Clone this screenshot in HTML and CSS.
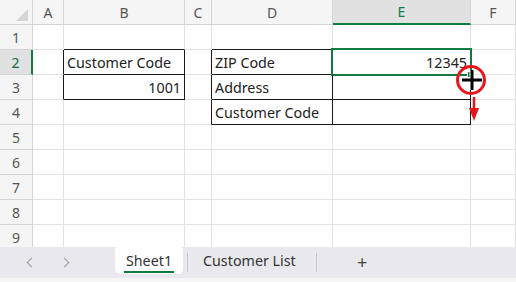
FILE: index.html
```html
<!DOCTYPE html>
<html>
<head>
<meta charset="utf-8">
<link rel="stylesheet" href="styles.css">
</head>
<body>
<div class="app">
  <div class="sheet">
    <div class="grid">
      <div class="c corner"><span class="tri"></span></div>
      <div class="c ch">A</div>
      <div class="c ch">B</div>
      <div class="c ch">C</div>
      <div class="c ch">D</div>
      <div class="c ch sel">E</div>
      <div class="c ch">F</div>

      <div class="c rh">1</div>
      <div class="c"></div>
      <div class="c kb"></div>
      <div class="c"></div>
      <div class="c kb"></div>
      <div class="c kb"></div>
      <div class="c"></div>

      <div class="c rh sel">2</div>
      <div class="c kr"></div>
      <div class="c k">Customer Code</div>
      <div class="c kr"></div>
      <div class="c k">ZIP Code</div>
      <div class="c k num current">12345<span class="handle"></span></div>
      <div class="c"></div>

      <div class="c rh">3</div>
      <div class="c kr"></div>
      <div class="c k num">1001</div>
      <div class="c kr"></div>
      <div class="c k">Address</div>
      <div class="c k"></div>
      <div class="c"></div>

      <div class="c rh">4</div>
      <div class="c"></div>
      <div class="c"></div>
      <div class="c kr"></div>
      <div class="c k">Customer Code</div>
      <div class="c k"></div>
      <div class="c"></div>

      <div class="c rh">5</div><div class="c"></div><div class="c"></div><div class="c"></div><div class="c"></div><div class="c"></div><div class="c"></div>
      <div class="c rh">6</div><div class="c"></div><div class="c"></div><div class="c"></div><div class="c"></div><div class="c"></div><div class="c"></div>
      <div class="c rh">7</div><div class="c"></div><div class="c"></div><div class="c"></div><div class="c"></div><div class="c"></div><div class="c"></div>
      <div class="c rh">8</div><div class="c"></div><div class="c"></div><div class="c"></div><div class="c"></div><div class="c"></div><div class="c"></div>
      <div class="c rh">9</div><div class="c"></div><div class="c"></div><div class="c"></div><div class="c"></div><div class="c"></div><div class="c"></div>
    </div>
    <svg class="cursor" width="50" height="70" viewBox="450 60 50 70">
      <circle cx="471" cy="80" r="13.5" fill="none" stroke="#e8161c" stroke-width="3"/>
      <path d="M462 80 H482 M472 70 V90" stroke="#fff" stroke-width="5"/>
      <path d="M462 80 H482 M472 70 V90" stroke="#000" stroke-width="3"/>
      <path d="M474 97 V110" stroke="#e8161c" stroke-width="2.5"/>
      <path d="M469 108 H479 L474 121 Z" fill="#e8161c"/>
    </svg>
  </div>
  <div class="tabs">
    <div class="nav">
      <span class="chev left"></span>
      <span class="chev right"></span>
    </div>
    <div class="tab on"><span class="label">Sheet1</span></div>
    <span class="sep"></span>
    <div class="tab off"><span class="label">Customer List</span></div>
    <span class="sep sep2"></span>
    <div class="add">+</div>
  </div>
  <div class="foot"></div>
</div>
</body>
</html>
```
FILE: styles.css
```css
html, body {
  margin: 0;
  padding: 0;
  background: #fff;
}
.app {
  width: 516px;
  height: 282px;
  overflow: hidden;
  display: flex;
  flex-direction: column;
  font-family: "Noto Sans", "Open Sans", sans-serif;
}
.sheet {
  position: relative;
  height: 247px;
  overflow: hidden;
  flex: none;
}
.grid {
  display: grid;
  grid-template-columns: 33px 31px 121px 27px 121px 138px 45px;
  grid-auto-rows: 25px;
}
.c {
  box-sizing: border-box;
  border-right: 1px solid #e1e1e1;
  border-bottom: 1px solid #e1e1e1;
  font-size: 14.3px;
  color: #222;
  padding: 0 3px;
  display: flex;
  align-items: center;
  white-space: nowrap;
  position: relative;
}
.ch, .rh, .corner {
  background: #f5f5f5;
  border-color: #d4d4d4;
  color: #555;
  justify-content: center;
  font-size: 14px;
  padding: 0;
}
.ch.sel {
  background: #e1e1e1;
  color: #107c41;
  border-bottom: 2px solid #107c41;
}
.rh.sel {
  background: #e1e1e1;
  color: #136c3b;
  border-right: 2px solid #107c41;
}
.corner .tri {
  position: absolute;
  right: 4px;
  bottom: 3px;
  width: 0;
  height: 0;
  border-left: 12px solid transparent;
  border-bottom: 12px solid #d6d6d6;
}
.k {
  border-right-color: #1a1a1a;
  border-bottom-color: #1a1a1a;
}
.kr {
  border-right-color: #1a1a1a;
}
.kb {
  border-bottom-color: #1a1a1a;
}
.num {
  justify-content: flex-end;
}
.current::after {
  content: "";
  position: absolute;
  left: -2px;
  top: -2px;
  right: -2px;
  bottom: -2px;
  border: 2px solid #107c41;
  pointer-events: none;
}
.handle {
  position: absolute;
  right: -4px;
  bottom: -4px;
  width: 5px;
  height: 5px;
  background: #107c41;
  border: 1px solid #fff;
  z-index: 2;
}
.cursor {
  position: absolute;
  left: 450px;
  top: 60px;
  z-index: 3;
}
.tabs {
  height: 31px;
  flex: none;
  background: #e9e9ed;
  display: flex;
  align-items: flex-start;
  font-size: 14.3px;
  color: #333;
}
.nav {
  width: 115px;
  height: 31px;
  flex: none;
  display: flex;
  align-items: center;
  padding-left: 28px;
  box-sizing: border-box;
  gap: 26px;
}
.chev {
  width: 6px;
  height: 6px;
  border-left: 1.5px solid #9a9a9a;
  border-bottom: 1.5px solid #9a9a9a;
}
.chev.left { transform: rotate(45deg); }
.chev.right { transform: rotate(-135deg); }
.tab {
  height: 27px;
  display: flex;
  align-items: center;
  box-sizing: border-box;
  flex: none;
}
.tab.on {
  width: 68px;
  background: #fff;
  border-radius: 3px 3px 5px 5px;
  justify-content: center;
}
.tab.on .label {
  border-bottom: 2px solid #107c41;
  padding: 0 2px 1px;
  line-height: 19px;
  margin-top: 2px;
}
.tab.off {
  width: 128px;
  padding-left: 15px;
}
.sep {
  width: 1px;
  height: 19px;
  background: #c8c8cc;
  margin: 6px 0 0 4px;
  flex: none;
}
.sep.sep2 {
  margin-left: 0;
}
.add {
  margin-left: 40px;
  height: 31px;
  line-height: 30px;
  font-size: 18px;
  color: #444;
}
.foot {
  height: 4px;
  background: #f6f6f6;
  flex: none;
}
```
